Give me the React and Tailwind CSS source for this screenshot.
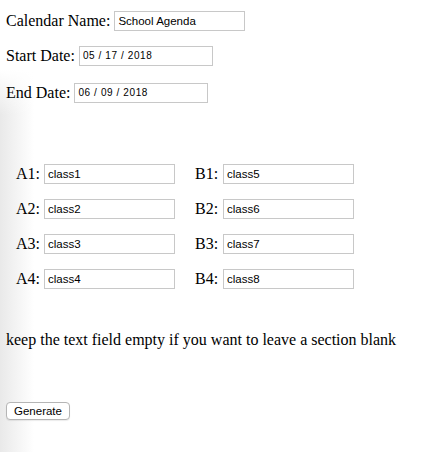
import { useState } from 'react'

const left = [
  ['A1', 'class1'],
  ['A2', 'class2'],
  ['A3', 'class3'],
  ['A4', 'class4'],
]
const right = [
  ['B1', 'class5'],
  ['B2', 'class6'],
  ['B3', 'class7'],
  ['B4', 'class8'],
]

// plain text box, the grey 1px border from the screenshot
function Field({ value, w = 'w-[131px]', mono }) {
  const [v, setV] = useState(value)
  return (
    <input
      type="text"
      value={v}
      onChange={(e) => setV(e.target.value)}
      className={`${w} h-[20px] border border-[#c8c8c8] bg-white px-[3px] text-black outline-none font-['Liberation_Sans',Arial,sans-serif] ${
        mono ? 'text-[10px] tracking-[0.6px]' : 'text-[11.5px]'
      }`}
    />
  )
}

function Slot({ label, value }) {
  return (
    <div className="flex items-center gap-[5px]">
      <span className="w-[23px]">{label}:</span>
      <Field value={value} />
    </div>
  )
}

export default function App() {
  return (
    <div className="min-h-[452px] w-full bg-[linear-gradient(to_bottom,#fff_70px,transparent_115px),linear-gradient(to_right,#e9e9e9,#fff_34px)] px-[6px] pt-[11px] text-[16px] leading-[20px] text-black font-['Liberation_Serif','Times_New_Roman',serif]">
      <div className="flex items-center gap-[4px]">
        <span>Calendar Name:</span>
        <Field value="School Agenda" />
      </div>
      <div className="mt-[15px] flex items-center gap-[4px]">
        <span>Start Date:</span>
        <Field value="05 / 17 / 2018" w="w-[134px]" mono />
      </div>
      <div className="mt-[17px] flex items-center gap-[4px]">
        <span>End Date:</span>
        <Field value="06 / 09 / 2018" w="w-[134px]" mono />
      </div>

      <div className="mt-[61px] grid grid-cols-[179px_auto] gap-y-[15px] pl-[10px]">
        {left.map((a, i) => (
          <div key={a[0]} className="contents">
            <Slot label={a[0]} value={a[1]} />
            <Slot label={right[i][0]} value={right[i][1]} />
          </div>
        ))}
      </div>

      <p className="mt-[41px]">keep the text field empty if you want to leave a section blank</p>

      <button
        type="button"
        className="mt-[52px] h-[18px] rounded-[4px] border border-[#b5b5b5] bg-white px-[7px] text-[11.5px] leading-[16px] shadow-[0_1px_1px_rgba(0,0,0,0.08)] font-['Liberation_Sans',Arial,sans-serif]"
      >
        Generate
      </button>
    </div>
  )
}
